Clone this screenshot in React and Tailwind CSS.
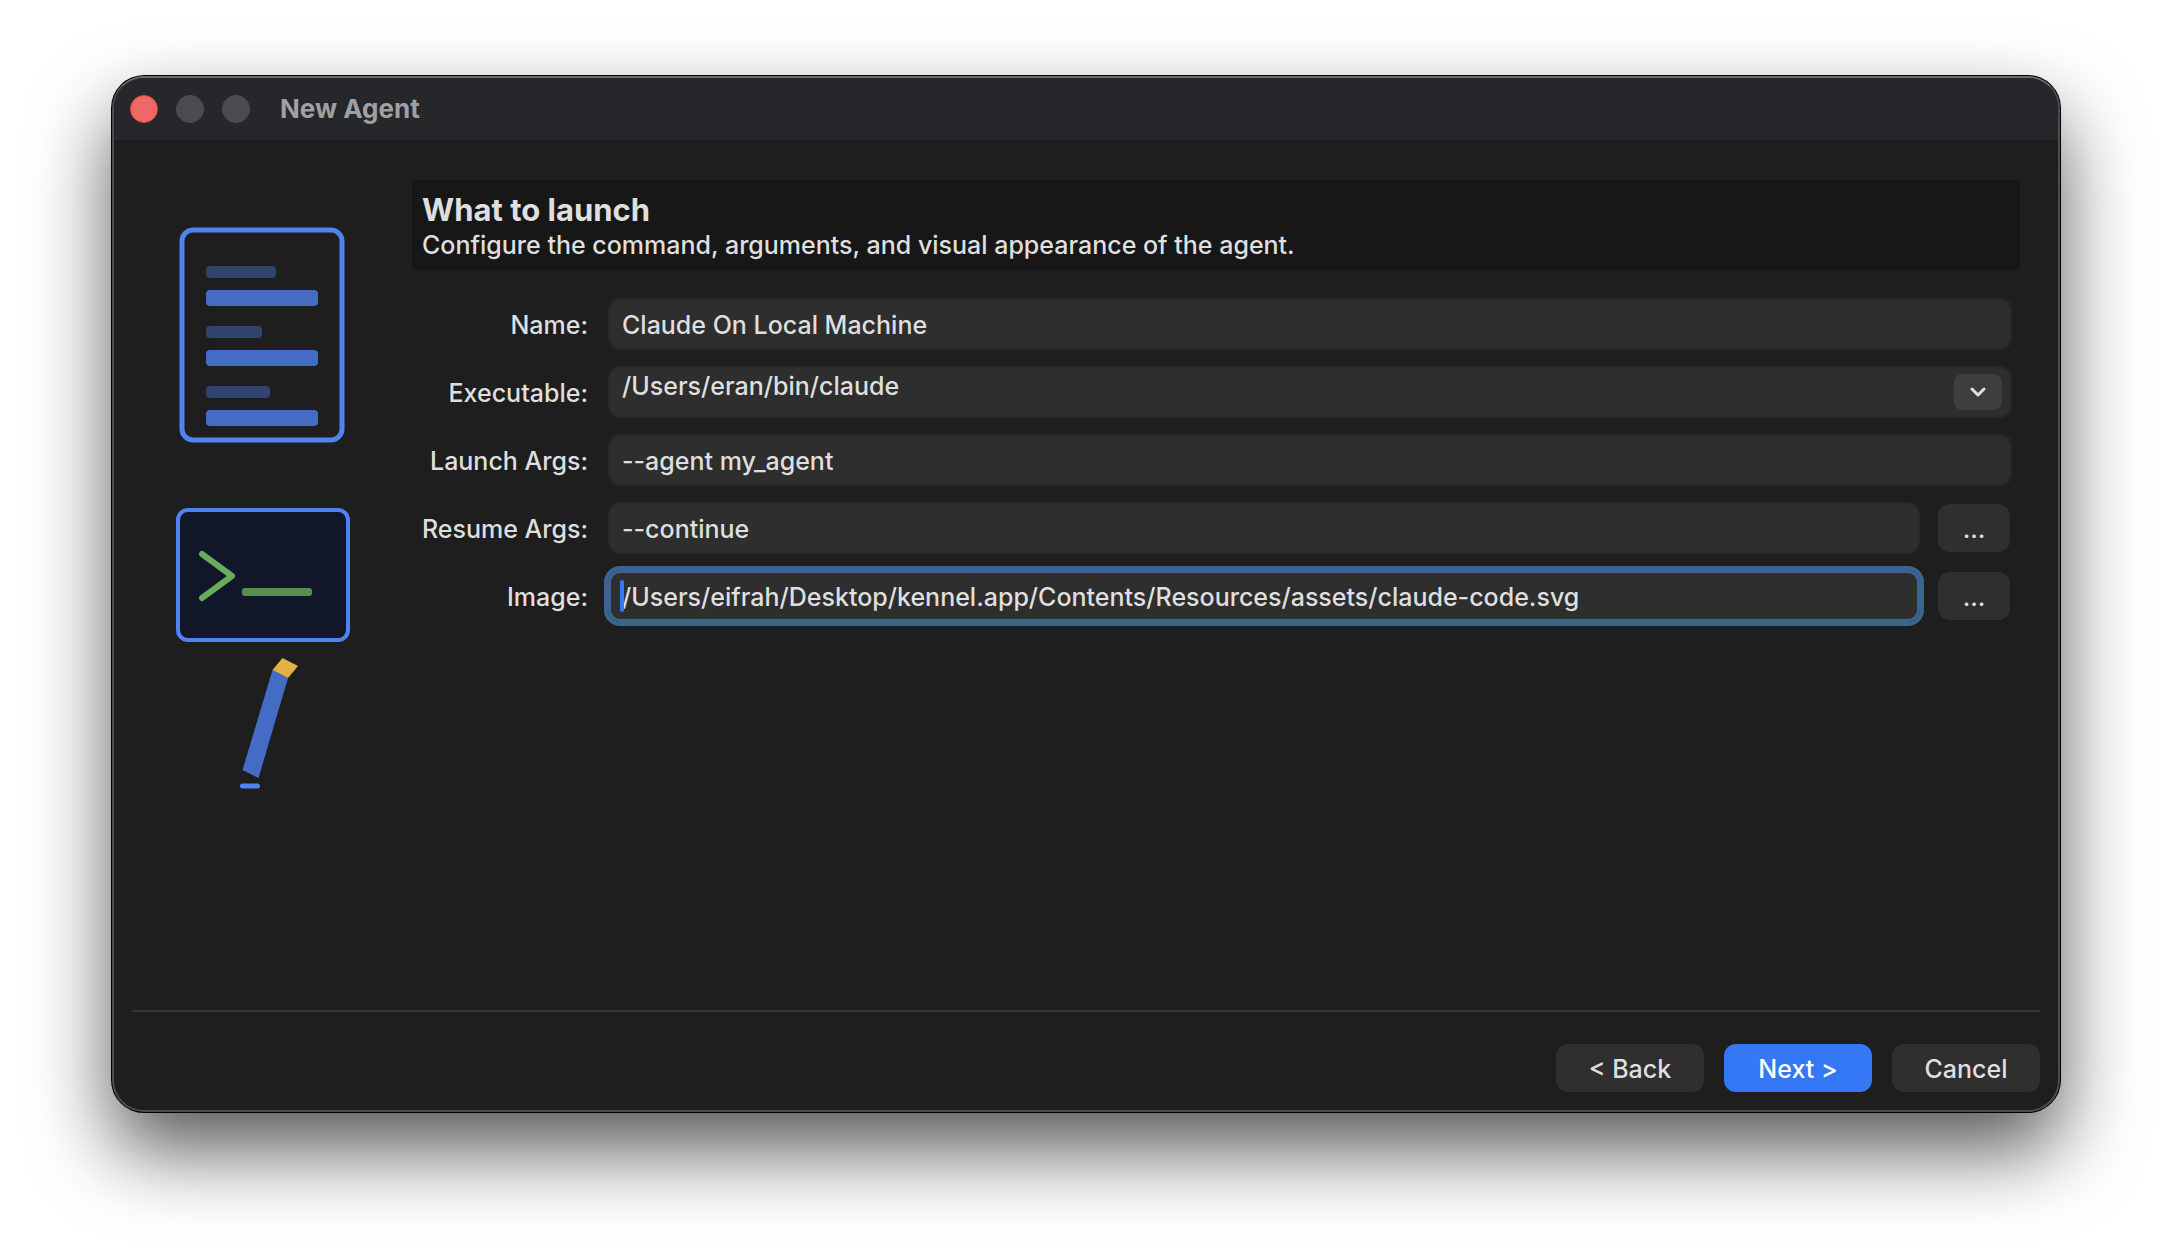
import React, { useState } from 'react';
import clsx from 'clsx';

const inputClass =
  'h-[52px] w-full min-w-0 rounded-xl border-2 border-[#282828] bg-[#2e2e2e] px-3 pt-[2px] text-[#dfdfdf] outline-none';

function TitleBar({ title }) {
  return (
    <header className="flex h-[62px] shrink-0 items-center bg-[#26272b] pl-4">
      <div className="flex gap-[18px]">
        <button type="button" aria-label="Close" className="h-7 w-7 rounded-full border border-[#e0443e] bg-[#ee6866]" />
        <button type="button" aria-label="Minimize" className="h-7 w-7 rounded-full border border-[#505155] bg-[#4a4b4f]" />
        <button type="button" aria-label="Zoom" className="h-7 w-7 rounded-full border border-[#505155] bg-[#4a4b4f]" />
      </div>
      <h1 className="ml-[30px] text-[26px] font-bold text-[#9fa0a2]">{title}</h1>
    </header>
  );
}

function Illustration() {
  return (
    <svg width="260" height="640" viewBox="0 0 260 640" fill="none" aria-hidden="true" className="shrink-0">
      {/* Document */}
      <rect x="50" y="50" width="160" height="210" rx="11" stroke="#4f83f1" strokeWidth="5" />
      <g fill="#314470">
        <rect x="74" y="86" width="70" height="12" rx="4" />
        <rect x="74" y="146" width="56" height="12" rx="4" />
        <rect x="74" y="206" width="64" height="12" rx="4" />
      </g>
      <g fill="#446cc4">
        <rect x="74" y="110" width="112" height="16" rx="4" />
        <rect x="74" y="170" width="112" height="16" rx="4" />
        <rect x="74" y="230" width="112" height="16" rx="4" />
      </g>

      {/* Terminal */}
      <rect x="46" y="330" width="170" height="130" rx="10" fill="#111628" stroke="#4f83f1" strokeWidth="4" />
      <path d="M70 374 L100 396 L70 418" stroke="#68ad5d" strokeWidth="6" strokeLinecap="round" strokeLinejoin="round" />
      <rect x="110" y="408" width="70" height="8" rx="3" fill="#568f50" />

      {/* Pencil */}
      <path d="M140.500 490 L156 498 L126.500 598 L110.500 590 Z" fill="#446cc4" />
      <path d="M150.500 478 L166 486 L156 498 L140.500 490 Z" fill="#e3b341" />
      <path d="M110.500 606 H125.500" stroke="#4f83f1" strokeWidth="5" strokeLinecap="round" />
    </svg>
  );
}

function Label({ htmlFor, children }) {
  return (
    <label htmlFor={htmlFor} className="whitespace-nowrap pt-[2px] text-right">
      {children}
    </label>
  );
}

function BrowseButton({ label }) {
  return (
    <button
      type="button"
      aria-label={label}
      className="mr-[2px] h-12 w-[72px] shrink-0 rounded-xl bg-[#2f2f2f] pt-[2px] text-[#dfdfdf]"
    >
      ...
    </button>
  );
}

function DialogButton({ primary, children }) {
  return (
    <button
      type="button"
      className={clsx(
        'h-12 w-[148px] rounded-xl pt-[2px]',
        primary ? 'bg-[#3478f6] text-white' : 'bg-[#2f2f2f] text-[#dfdfdf]'
      )}
    >
      {children}
    </button>
  );
}

function AgentForm() {
  const [form, setForm] = useState({
    name: 'Claude On Local Machine',
    executable: '/Users/eran/bin/claude',
    launchArgs: '--agent my_agent',
    resumeArgs: '--continue',
    image: '/Users/eifrah/Desktop/kennel.app/Contents/Resources/assets/claude-code.svg',
  });

  const update = (e) => setForm({ ...form, [e.target.id]: e.target.value });

  return (
    <form className="mt-7 grid grid-cols-[166px_minmax(0,1fr)] items-center gap-x-5 gap-y-4 pl-[10px] pr-2">
      <Label htmlFor="name">Name:</Label>
      <input id="name" type="text" value={form.name} onChange={update} className={inputClass} />

      <Label htmlFor="executable">Executable:</Label>
      <div className="relative">
        <select
          id="executable"
          value={form.executable}
          onChange={update}
          className={clsx(inputClass, 'block appearance-none pb-[14px]')}
        >
          <option>/Users/eran/bin/claude</option>
        </select>
        <span className="pointer-events-none absolute right-[10px] top-2 flex h-9 w-12 items-center justify-center rounded-lg bg-[#3e3e3e]">
          <svg width="16" height="10" viewBox="0 0 16 10" fill="none" aria-hidden="true">
            <path d="M2 2 L8 8 L14 2" stroke="#dfdfdf" strokeWidth="3" strokeLinecap="round" strokeLinejoin="round" />
          </svg>
        </span>
      </div>

      <Label htmlFor="launchArgs">Launch Args:</Label>
      <input id="launchArgs" type="text" value={form.launchArgs} onChange={update} className={inputClass} />

      <Label htmlFor="resumeArgs">Resume Args:</Label>
      <div className="flex items-center gap-[18px]">
        <input id="resumeArgs" type="text" value={form.resumeArgs} onChange={update} className={inputClass} />
        <BrowseButton label="Edit resume args" />
      </div>

      <Label htmlFor="image">Image:</Label>
      <div className="flex items-center gap-[18px]">
        <div className="relative min-w-0 flex-1">
          <input
            id="image"
            type="text"
            value={form.image}
            onChange={update}
            className="block h-[52px] w-full rounded-xl border-3 border-[#3b658f] bg-[#2e2e2e] px-[11px] pt-[2px] text-[#dfdfdf] outline-4 outline-[#3b658f]"
          />
          {/* Caret */}
          <span className="absolute left-3 top-[10px] h-8 w-1 rounded-full bg-[#3478f6]" />
        </div>
        <BrowseButton label="Choose image" />
      </div>
    </form>
  );
}

function App() {
  return (
    <div className="flex min-h-screen bg-white px-28 pt-[76px] pb-[148px] font-['Inter','Liberation_Sans',sans-serif] text-[25px] font-medium leading-8 text-[#dfdfdf]">
      <main className="flex min-w-0 flex-1 flex-col overflow-hidden rounded-[32px] border-2 border-[#4c4c4c] border-t-[#6c6d70] bg-[#1e1e1e] shadow-[0_0_0_1px_#000,0_38px_80px_rgba(0,0,0,0.66)]">
        <TitleBar title="New Agent" />

        <div className="flex flex-1 gap-5 pl-[18px] pr-[38px] pt-10">
          <Illustration />
          <section className="min-w-0 flex-1">
            <div className="bg-[#171717] px-[10px] pt-3 pb-2">
              <h2 className="text-[31px] font-bold leading-9">What to launch</h2>
              <p className="leading-[34px]">Configure the command, arguments, and visual appearance of the agent.</p>
            </div>
            <AgentForm />
          </section>
        </div>

        <footer className="mx-[18px] flex justify-end gap-5 border-t-2 border-[#353535] pt-8 pb-[18px]">
          <DialogButton>&lt; Back</DialogButton>
          <DialogButton primary>Next &gt;</DialogButton>
          <DialogButton>Cancel</DialogButton>
        </footer>
      </main>
    </div>
  );
}

export default App;
